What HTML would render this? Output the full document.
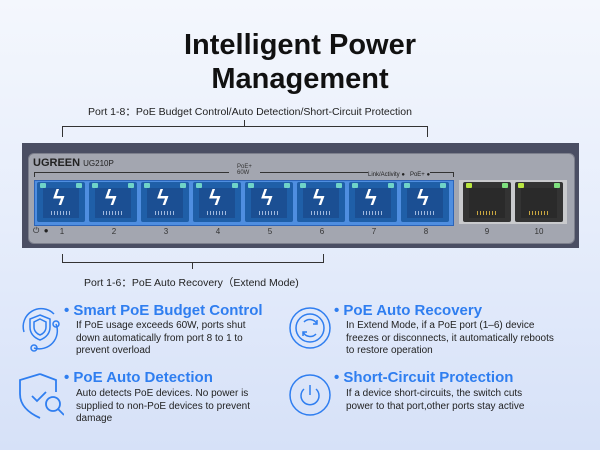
<!DOCTYPE html><html><head><style>
body{margin:0;width:600px;height:450px;overflow:hidden;background:linear-gradient(180deg,#f4f7fd 0%,#e6edfb 50%,#d6e1f8 100%);font-family:"Liberation Sans",sans-serif;position:relative}
.a{position:absolute}
h1{position:absolute;left:0;width:600px;top:28px;margin:0;text-align:center;font-size:29px;line-height:34px;font-weight:bold;color:#111}
.port{position:absolute;top:182px;width:48px;height:40px;background:#1f5fa8;border-radius:2px}
.port .j{position:absolute;left:6px;top:6px;width:36px;height:30px;background:#1b4f93}
.port .b{position:absolute;left:16px;top:3px;color:#fff;font-size:22px;font-weight:bold}
.port .p{position:absolute;left:14px;top:29px;width:20px;height:4px;background:repeating-linear-gradient(90deg,#9fb8dd 0 1px,transparent 1px 3px)}
.led{position:absolute;top:1px;width:6px;height:5px;background:#6fd3c8;border-radius:1px}
.num{position:absolute;top:227px;font-size:8px;color:#333;width:20px;text-align:center}
.h{position:absolute;font-size:15px;color:#2f7ef0;font-weight:bold}
.t{position:absolute;font-size:10px;line-height:12.5px;color:#222}
</style></head><body>
<h1>Intelligent Power<br>Management</h1>
<div class="a" style="left:88px;top:104px;font-size:10.5px;color:#222">Port 1-8：PoE Budget Control/Auto Detection/Short-Circuit Protection</div>
<div class="a" style="left:62px;top:126px;width:364px;height:10px;border:1px solid #333;border-bottom:none"></div>
<div class="a" style="left:244px;top:120px;width:1px;height:6px;background:#333"></div>
<div class="a" style="left:22px;top:143px;width:557px;height:105px;background:#4a4e63"></div>
<div class="a" style="left:28px;top:153px;width:545px;height:89px;background:#a3a6b0;border-radius:6px;border:1px solid #7c7f8c"></div>
<div class="a" style="left:33px;top:157px;font-size:11px;font-weight:bold;color:#222">UGREEN <span style="font-size:8px;font-weight:normal">UG210P</span></div>
<div class="a" style="left:237px;top:164px;font-size:6px;color:#333;line-height:6px">PoE+<br>60W</div>
<div class="a" style="left:34px;top:172px;width:194px;height:4px;border-top:1px solid #333;border-left:1px solid #333"></div>
<div class="a" style="left:260px;top:172px;width:193px;height:4px;border-top:1px solid #333;border-right:1px solid #333"></div>
<div class="a" style="left:368px;top:172px;font-size:6px;color:#222;background:#a3a6b0">Link/Activity ● &nbsp; PoE+ ●</div>
<div class="a" style="left:34px;top:180px;width:418px;height:44px;background:#4f8ee0;border:1px solid #2c64b8"></div>
<div class="port" style="left:37px"><div class="j"></div><div class="p"></div><div class="led" style="left:3px"></div><div class="led" style="left:39px"></div><div class="b">ϟ</div></div>
<div class="port" style="left:89px"><div class="j"></div><div class="p"></div><div class="led" style="left:3px"></div><div class="led" style="left:39px"></div><div class="b">ϟ</div></div>
<div class="port" style="left:141px"><div class="j"></div><div class="p"></div><div class="led" style="left:3px"></div><div class="led" style="left:39px"></div><div class="b">ϟ</div></div>
<div class="port" style="left:193px"><div class="j"></div><div class="p"></div><div class="led" style="left:3px"></div><div class="led" style="left:39px"></div><div class="b">ϟ</div></div>
<div class="port" style="left:245px"><div class="j"></div><div class="p"></div><div class="led" style="left:3px"></div><div class="led" style="left:39px"></div><div class="b">ϟ</div></div>
<div class="port" style="left:297px"><div class="j"></div><div class="p"></div><div class="led" style="left:3px"></div><div class="led" style="left:39px"></div><div class="b">ϟ</div></div>
<div class="port" style="left:349px"><div class="j"></div><div class="p"></div><div class="led" style="left:3px"></div><div class="led" style="left:39px"></div><div class="b">ϟ</div></div>
<div class="port" style="left:401px"><div class="j"></div><div class="p"></div><div class="led" style="left:3px"></div><div class="led" style="left:39px"></div><div class="b">ϟ</div></div>
<div class="a" style="left:459px;top:180px;width:108px;height:44px;background:#c9cacd"></div>
<div class="port" style="left:463px;background:#333"><div class="j" style="background:#2a2a2a"></div><div class="p" style="background:repeating-linear-gradient(90deg,#c9a640 0 1px,transparent 1px 3px)"></div><div class="led" style="left:3px;background:#b9e640"></div><div class="led" style="left:39px;background:#7ee07e"></div></div>
<div class="port" style="left:515px;background:#333"><div class="j" style="background:#2a2a2a"></div><div class="p" style="background:repeating-linear-gradient(90deg,#c9a640 0 1px,transparent 1px 3px)"></div><div class="led" style="left:3px;background:#b9e640"></div><div class="led" style="left:39px;background:#7ee07e"></div></div>
<div class="a" style="left:33px;top:226px;font-size:8px;color:#222">⏻ &nbsp;●</div>
<div class="num" style="left:52px">1</div><div class="num" style="left:104px">2</div><div class="num" style="left:156px">3</div><div class="num" style="left:208px">4</div><div class="num" style="left:260px">5</div><div class="num" style="left:312px">6</div><div class="num" style="left:364px">7</div><div class="num" style="left:416px">8</div><div class="num" style="left:477px">9</div><div class="num" style="left:529px">10</div>
<div class="a" style="left:62px;top:254px;width:260px;height:8px;border:1px solid #333;border-top:none"></div>
<div class="a" style="left:192px;top:263px;width:1px;height:6px;background:#333"></div>
<div class="a" style="left:84px;top:275px;font-size:10.5px;color:#222">Port 1-6：PoE Auto Recovery（Extend Mode)</div>
<svg class="a" style="left:16px;top:304px" width="48" height="48" fill="none" stroke="#2f7ef0" stroke-width="1.5"><path d="M8 28A18 18 0 0 1 38 10M40 20A18 18 0 0 1 18 44"/><circle cx="40" cy="20" r="3"/><circle cx="18" cy="44" r="3"/><path d="M24 11l10 4v8c0 7-5 11-10 13-5-2-10-6-10-13v-8z"/><path d="M24 15l6 3v5c0 4-3 7-6 8-3-1-6-4-6-8v-5z"/></svg>
<svg class="a" style="left:16px;top:372px" width="48" height="48" fill="none" stroke="#2f7ef0" stroke-width="1.8"><path d="M24 2l16 6v12M24 2L4 8v14c0 12 9 19 20 24"/><path d="M16 24l5 5 9-9"/><circle cx="37" cy="32" r="7"/><path d="M42 37l6 6"/></svg>
<svg class="a" style="left:288px;top:306px" width="44" height="44" fill="none" stroke="#2f7ef0" stroke-width="1.5"><circle cx="22" cy="22" r="20"/><circle cx="22" cy="22" r="14"/><path d="M16 16a8 8 0 0 1 13 2M28 28a8 8 0 0 1-13-2M29 14v4h-4M15 30v-4h4"/></svg>
<svg class="a" style="left:288px;top:373px" width="44" height="44" fill="none" stroke="#2f7ef0" stroke-width="1.5"><circle cx="22" cy="22" r="20"/><path d="M16 16a9 9 0 1 0 12 0M22 12v10"/></svg>
<div class="h" style="left:64px;top:302px">• Smart PoE Budget Control</div>
<div class="t" style="left:76px;top:320px">If PoE usage exceeds 60W, ports shut<br>down automatically from port 8 to 1 to<br>prevent overload</div>
<div class="h" style="left:64px;top:369px">• PoE Auto Detection</div>
<div class="t" style="left:76px;top:388px">Auto detects PoE devices. No power is<br>supplied to non-PoE devices to prevent<br>damage</div>
<div class="h" style="left:334px;top:302px">• PoE Auto Recovery</div>
<div class="t" style="left:346px;top:320px">In Extend Mode, if a PoE port (1–6) device<br>freezes or disconnects, it automatically reboots<br>to restore operation</div>
<div class="h" style="left:334px;top:369px">• Short-Circuit Protection</div>
<div class="t" style="left:346px;top:388px">If a device short-circuits, the switch cuts<br>power to that port,other ports stay active</div>
</body></html>
